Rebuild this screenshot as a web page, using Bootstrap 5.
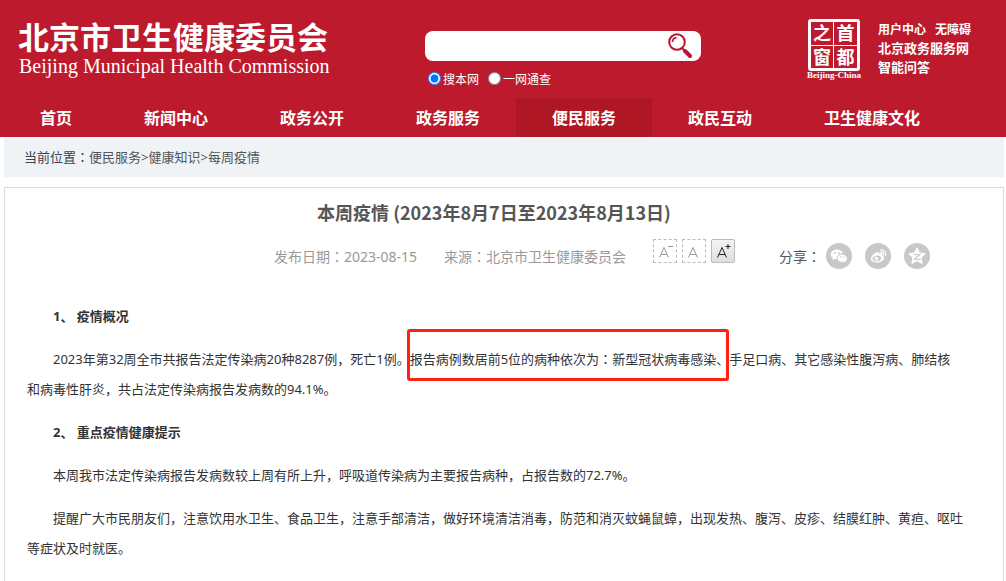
<!DOCTYPE html>
<html lang="zh-CN">
<head>
<meta charset="utf-8">
<meta name="viewport" content="width=device-width, initial-scale=1">
<title>北京市卫生健康委员会</title>
<link href="https://cdn.jsdelivr.net/npm/bootstrap@5.3.0/dist/css/bootstrap.min.css" rel="stylesheet">
<style>
:root{--brand:#bd1a2d;--cjk:"Noto Sans","Noto Sans CJK SC",sans-serif}
body{font-family:var(--cjk);font-size:13px;color:#333;overflow-x:hidden}
a{color:inherit;text-decoration:none}
.colon{font-family:"Noto Sans CJK TC",sans-serif}
.site-head{background:var(--brand);color:#fff}
.head-top{height:98px;padding-left:18px;padding-right:35px}
.brand-zone{width:407px;padding-top:18px}
.brand-cn{font-size:31px;line-height:38px;font-weight:700}
.brand-en{font-family:"Liberation Serif",serif;font-size:20px;line-height:20px;padding-left:1px}
.search-zone{width:276px;padding-top:31px}
.search-bar{height:30px;border-radius:8px;background:#fff}
.search-bar input{background:transparent;font-size:14px;outline:0}
.search-bar svg{width:28px;height:28px}
.scope{font-size:12px;line-height:20px;margin-top:9px}
.scope input{width:13px;height:13px;margin:0 2px 3px 3px}
.scope label{margin-right:6px}
.seal-box{padding-top:19px;width:58px}
.seal{width:52px;height:52px;border:3px solid #fff;border-radius:3px;display:grid;grid-template-columns:1fr 1fr;font-size:18px;line-height:22px;font-weight:700;text-align:center}
.seal span:nth-child(odd){border-right:1px solid #fff}
.seal span:nth-child(-n+2){border-bottom:1px solid #fff}
.seal-name{font-family:"Liberation Serif",serif;font-size:9px;line-height:9px;font-weight:700;white-space:nowrap}
.quick{font-size:13px;line-height:19px;font-weight:700;padding-top:20px;margin-left:15px;width:93px}
.quick-row{font-size:12px}
.site-nav{padding-left:4px}
.site-nav .nav-link{color:#fff;font-family:"Noto Sans CJK SC",sans-serif;font-size:16px;font-weight:700;line-height:39px;padding:0 36px}
.site-nav .active{background:#b01725}
.page-body{margin-left:4px;margin-right:2px}
.crumbs{background:#eff3f6;line-height:40px;padding-left:20px;color:#555}
.crumbs .here{color:#345}
.article{border:1px solid #d9dee2;margin-top:10px;padding:10px 36px 12px 22px;min-height:410px}
.article h1{font-family:"Noto Sans CJK SC",sans-serif;font-size:18px;line-height:28px;font-weight:700;color:#555;margin:0 6px 0 0;text-align:center}
.meta{font-size:14px;color:#999;padding-left:247px;height:34px;margin-top:13px}
.meta time,.meta .src{margin-right:27px;white-space:nowrap}
.meta .sizes{gap:5px}
.size-btn{width:24px;height:24px;padding:0;border:1px dashed #bbb;background:#fff;color:#999;display:flex}
.size-btn.on{border:1px solid #bbb;border-radius:2px;background:linear-gradient(#f4f4f4,#dedede);color:#222}
.size-btn svg{width:22px;height:22px}
.share{margin-left:44px;color:#555;gap:13px}
.share-label{margin-right:-8px}
.share svg{width:26px;height:26px;display:block}
.story{margin-top:28px;line-height:30px}
.story p,.story h2{margin:0 0 13px;text-indent:26px;font-size:13px;line-height:30px}
.story h2{font-weight:700}
.hot{position:relative;text-indent:0}
.hot::after{content:"";position:absolute;inset:-21px -13px -13px -3px;border:3px solid #ff2112;border-radius:3px}
</style>
</head>
<body>
<header class="site-head">
  <div class="head-top d-flex">
    <div class="brand-zone flex-shrink-0">
      <div class="brand-cn">北京市卫生健康委员会</div>
      <div class="brand-en">Beijing Municipal Health Commission</div>
    </div>
    <form class="search-zone flex-shrink-0">
      <div class="search-bar d-flex align-items-center pe-2">
        <input class="flex-grow-1 border-0 px-2" type="text" aria-label="搜索">
        <button class="btn p-0 border-0 d-flex" type="button" aria-label="搜索">
          <svg viewBox="0 0 28 28" fill="none" stroke="#bd1230"><circle cx="12" cy="10" r="7.800" stroke-width="2"/><path d="M7.500 10q0-4 4-4.500" stroke-width="1.600"/><path d="M17 16l3 3" stroke-width="2"/><path d="M20 19l5 5" stroke-width="4" stroke-linecap="round"/></svg>
        </button>
      </div>
      <div class="scope d-flex align-items-center">
        <input type="radio" name="scope" id="s1" checked><label for="s1">搜本网</label>
        <input type="radio" name="scope" id="s2"><label for="s2">一网通查</label>
      </div>
    </form>
    <div class="d-flex ms-auto">
      <div class="seal-box d-flex flex-column align-items-center">
        <div class="seal"><span>之</span><span>首</span><span>窗</span><span>都</span></div>
        <div class="seal-name">Beijing-China</div>
      </div>
      <div class="quick">
        <div class="quick-row d-flex justify-content-between"><a href="#">用户中心</a><a href="#">无障碍</a></div>
        <a class="d-block" href="#">北京政务服务网</a>
        <a class="d-block" href="#">智能问答</a>
      </div>
    </div>
  </div>
  <nav class="site-nav nav flex-nowrap text-nowrap">
    <a class="nav-link" href="#">首页</a>
    <a class="nav-link" href="#">新闻中心</a>
    <a class="nav-link" href="#">政务公开</a>
    <a class="nav-link" href="#">政务服务</a>
    <a class="nav-link active" href="#">便民服务</a>
    <a class="nav-link" href="#">政民互动</a>
    <a class="nav-link" href="#">卫生健康文化</a>
  </nav>
</header>
<main class="page-body">
  <div class="crumbs"><span class="here">当前位置<span class="colon" lang="zh-TW">：</span></span><a href="#">便民服务</a>&gt;<a href="#">健康知识</a>&gt;<a href="#">每周疫情</a></div>
  <article class="article">
    <h1>本周疫情 (2023年8月7日至2023年8月13日)</h1>
    <div class="meta d-flex align-items-center">
      <time datetime="2023-08-15">发布日期<span class="colon" lang="zh-TW">：</span>2023-08-15</time>
      <span class="src">来源<span class="colon" lang="zh-TW">：</span>北京市卫生健康委员会</span>
      <div class="sizes d-flex align-self-start">
        <button class="size-btn" type="button" aria-label="小字"><svg viewBox="0 0 22 22" fill="none" stroke="currentColor"><path d="M5.500 17.500L10 7.500l4.500 10M7 14.500h6M14 6.500h5"/></svg></button>
        <button class="size-btn" type="button" aria-label="中字"><svg viewBox="0 0 22 22" fill="none" stroke="currentColor"><path d="M5.500 17.500L10 7.500l4.500 10M7 14.500h6"/></svg></button>
        <button class="size-btn on" type="button" aria-label="大字"><svg viewBox="0 0 22 22" fill="none" stroke="currentColor"><path d="M5.500 17.500L10 7.500l4.500 10M7 14.500h6M13.500 6.500h5M16 4v5"/></svg></button>
      </div>
      <div class="share d-flex align-items-center">
        <span class="share-label text-nowrap">分享<span class="colon" lang="zh-TW">：</span></span>
        <a href="#" aria-label="微信"><svg viewBox="0 0 26 26"><circle cx="13" cy="13" r="13" fill="#c8c8c8"/><path d="M11 6.500c-3.600 0-6.300 2.200-6.300 5 0 1.600.9 2.900 2.300 3.800l-.6 1.900 2.200-1.200q1.200.4 2.600.3c-.8-3.700 2.300-6.100 5.800-6-.6-2.300-3.100-3.800-6-3.800z" fill="#fff"/><path d="M16.300 11.300c-3 0-5.100 1.800-5.100 4s2.100 4 5.100 4q1 0 1.800-.3l1.700 1-.4-1.600c1.200-.7 1.900-1.900 1.900-3.100 0-2.200-2.200-4-5-4z" fill="#fff" stroke="#c8c8c8" stroke-width=".7"/><g fill="#c8c8c8"><circle cx="8.800" cy="10" r=".9"/><circle cx="13" cy="10" r=".9"/><circle cx="14.700" cy="14" r=".7"/><circle cx="18" cy="14" r=".7"/></g></svg></a>
        <a href="#" aria-label="微博"><svg viewBox="0 0 26 26"><circle cx="13" cy="13" r="13" fill="#c8c8c8"/><path d="M11.500 9.500c1.300-.7 2.800-.5 2.400 1.200 2-.8 4-.4 3.400 1.500 4 1.600 1.400 7.300-5.500 7.300-3.300 0-5.900-1.500-5.900-4 0-2 2.700-5 5.600-6z" fill="#fff"/><ellipse cx="11.700" cy="15.500" rx="4.300" ry="2.900" fill="#c8c8c8" transform="rotate(-8 11.700 15.500)"/><circle cx="11.200" cy="15.700" r="2" fill="#fff"/><circle cx="10.800" cy="16" r=".8" fill="#c8c8c8"/><path d="M15.500 7.200c3.500-.8 6 2 4.800 5.300M15.900 9.400c1.800-.4 3 .9 2.400 2.600" fill="none" stroke="#fff" stroke-width="1.200" stroke-linecap="round"/></svg></a>
        <a href="#" aria-label="QQ空间"><svg viewBox="0 0 26 26"><circle cx="13" cy="13" r="13" fill="#c8c8c8"/><path d="M13 4.800l2.500 5.100 5.700.8-4.100 4 1 5.700-5.100-2.700-5.100 2.700 1-5.700-4.100-4 5.700-.8z" fill="#fff" stroke="#fff" stroke-linejoin="round"/><path d="M9.500 11.500h6.300l-5.300 4.500q3 .9 6.200.2" fill="none" stroke="#c8c8c8" stroke-width="1.200"/></svg></a>
      </div>
    </div>
    <div class="story">
      <h2>1、 疫情概况</h2>
      <p>2023年第32周全市共报告法定传染病20种8287例，死亡1例。<span class="hot">报告病例数居前5位的病种依次为<span class="colon" lang="zh-TW">：</span>新型冠状病毒感染</span>、手足口病、其它感染性腹泻病、肺结核<br>和病毒性肝炎，共占法定传染病报告发病数的94.1%。</p>
      <h2>2、 重点疫情健康提示</h2>
      <p>本周我市法定传染病报告发病数较上周有所上升，呼吸道传染病为主要报告病种，占报告数的72.7%。</p>
      <p>提醒广大市民朋友们，注意饮用水卫生、食品卫生，注意手部清洁，做好环境清洁消毒，防范和消灭蚊蝇鼠蟑，出现发热、腹泻、皮疹、结膜红肿、黄疸、呕吐等症状及时就医。</p>
    </div>
  </article>
</main>
<script src="https://cdn.jsdelivr.net/npm/bootstrap@5.3.0/dist/js/bootstrap.bundle.min.js"></script>
</body>
</html>
